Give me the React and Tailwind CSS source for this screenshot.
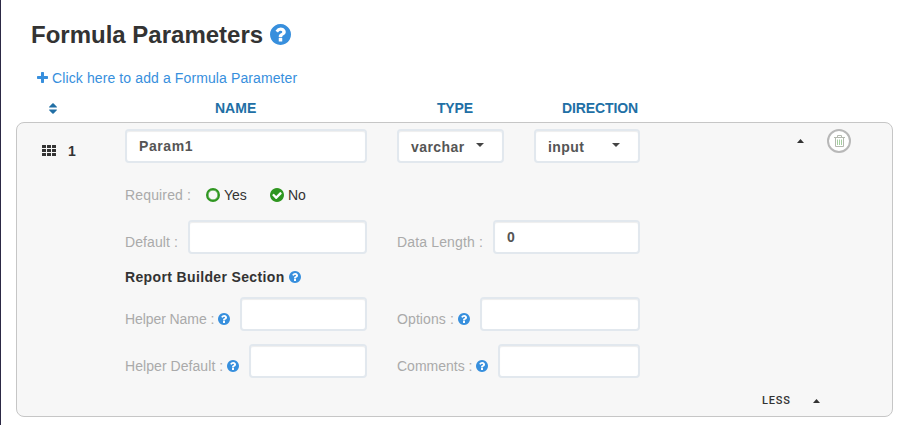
const CIRCLE =
  'm384 192q0 209-103 385.5t-279.5 279.5-385.5 103-385.5-103-279.5-279.5-103-385.5 103-385.5 279.5-279.5 385.5-103 385.5 103 279.5 279.5 103 385.5z';

function Help({ className = 'size-3', stroke = 70 }) {
  return (
    <svg viewBox="128 128 1536 1536" className={`shrink-0 ${className}`}>
      <circle cx="896" cy="896" r="700" fill="#fff" stroke="#fff" strokeWidth={stroke} />
      <path
        fill="#378fdd"
        d={
          'M1024 1376v-192q0-14-9-23t-23-9h-192q-14 0-23 9t-9 23v192q0 14 9 23t23 9h192q14 0 23-9t9-23zm256-672q0-88-55.5-163t-138.5-116-170-41q-243 0-371 213-15 24 8 42l132 100q7 6 19 6 16 0 25-12 53-68 86-92 34-24 86-24 48 0 85.5 26t37.5 59q0 38-20 61t-68 45q-63 28-115.5 86.5t-52.5 125.5v36q0 14 9 23t23 9h192q14 0 23-9t9-23q0-19 21.5-49.5t54.5-49.5q32-18 49-28.5t46-35 44.5-48 28-60.5 12.5-81z' +
          CIRCLE
        }
      />
    </svg>
  );
}

function Box({ className = '', children }) {
  return (
    <div
      className={`flex h-[34px] shrink-0 items-center rounded border-2 border-[#e2e8ee] bg-white pl-3 text-sm font-bold text-[#555] shadow-[inset_0_1px_1px_rgba(0,0,0,0.07)] ${className}`}
    >
      {children}
    </div>
  );
}

function Field({ label, help, tracking = '', box, value, className }) {
  return (
    <div className={`flex justify-between ${className}`}>
      <div className="flex items-center gap-1 pt-2.5 text-sm whitespace-nowrap text-[#aaa]">
        <span className={tracking}>{label} :</span>
        {help && <Help />}
      </div>
      <Box className={box}>{value}</Box>
    </div>
  );
}

function Down() {
  return (
    <svg viewBox="0 0 8 4" className="mb-1 h-1 w-2" fill="#444">
      <path d="M0 0h8L4 4z" />
    </svg>
  );
}

function Up() {
  return (
    <svg viewBox="0 0 7 4" className="h-1 w-[7px]" fill="#333">
      <path d="M0 4h7L3.5 0z" />
    </svg>
  );
}

export default function App() {
  return (
    <div className="h-[425px] w-[922px] overflow-hidden border-l border-[#2c2945] bg-white font-['Liberation_Sans',Arial,sans-serif] text-sm text-[#333]">
      <h1 className="flex h-[50px] items-center gap-[7px] pt-[19px] pl-[30px] text-2xl leading-[30px] font-bold">
        Formula Parameters
        <Help className="size-[21px]" />
      </h1>

      <div className="mt-[18px] flex h-5 items-center gap-1 pl-9 tracking-[0.11px] text-[#378fdd]">
        <svg viewBox="0 0 11 11" className="mb-px size-[11px]" fill="#378fdd">
          <path d="M4 .7Q4 0 4.7 0h1.6Q7 0 7 .7V4h3.3q.7 0 .7.7v1.6q0 .7-.7.7H7v3.3q0 .7-.7.7H4.7Q4 11 4 10.3V7H.7Q0 7 0 6.3V4.7Q0 4 .7 4H4z" />
        </svg>
        Click here to add a Formula Parameter
      </div>

      <div className="mt-2.5 flex h-5 items-center pl-12 font-bold text-[#216fa5]">
        <svg viewBox="0 0 9 12" className="h-[11px] w-2" fill="#216fa5">
          <path d="M.6 5h7.8q.8-.2.4-.9L4.9.2q-.4-.3-.8 0L.2 4.1Q-.2 4.8.6 5zM.6 7h7.8q.8.2.4.9l-3.9 3.9q-.4.3-.8 0L.2 7.9Q-.2 7.2.6 7z" />
        </svg>
        <span className="ml-[158px] w-[222px]">NAME</span>
        <span className="w-[125px] tracking-[-0.2px]">TYPE</span>
        <span className="tracking-[-0.1px]">DIRECTION</span>
      </div>

      <div className="mt-1 ml-[15px] flex h-[295px] w-[877px] rounded-lg border border-[#c6c6c6] bg-[#f7f7f7] pt-1.5 pl-6">
        <div className="flex h-11 w-[84px] items-center gap-[11px] pl-px font-bold">
          <svg viewBox="0 0 15 11" className="mb-px h-[11px] w-[15px]" fill="#333">
            <rect width="4" height="3" rx=".3" />
            <rect x="5" width="4" height="3" rx=".3" />
            <rect x="10" width="4" height="3" rx=".3" />
            <rect y="4" width="4" height="3" rx=".3" />
            <rect x="5" y="4" width="4" height="3" rx=".3" />
            <rect x="10" y="4" width="4" height="3" rx=".3" />
            <rect y="8" width="4" height="3" rx=".3" />
            <rect x="5" y="8" width="4" height="3" rx=".3" />
            <rect x="10" y="8" width="4" height="3" rx=".3" />
          </svg>
          1
        </div>

        <div className="w-[515px]">
          <div className="flex">
            <Box className="w-[242px] tracking-[0.6px]">Param1</Box>
            <Box className="ml-[30px] w-[107px] justify-between pt-0.5 pr-[18px] tracking-[0.45px]">
              varchar
              <Down />
            </Box>
            <Box className="ml-[30px] w-[106px] justify-between pt-0.5 pr-[18px] tracking-[0.4px]">
              input
              <Down />
            </Box>
          </div>

          <div className="mt-[22px] flex h-5 items-center">
            <span className="w-[81px] tracking-[0.15px] text-[#aaa]">Required :</span>
            <span className="mb-px size-3.5 rounded-full border-2 border-[#2f9620] shadow-[inset_0_0_0_0.5px_#2f9620]" />
            <span className="ml-1 w-[46px]">Yes</span>
            <svg viewBox="128 128 1536 1536" className="mb-px size-3.5">
              <circle cx="896" cy="896" r="700" fill="#fff" />
              <path
                fill="#2f9620"
                d={
                  'M1412 734q0-28-18-46l-91-90q-19-19-45-19t-45 19l-408 407-226-226q-19-19-45-19t-45 19l-91 90q-18 18-18 46 0 27 18 45l362 362q19 19 45 19 27 0 46-19l543-543q18-18 18-45z' +
                  CIRCLE.replace('m384 192', 'm252 162')
                }
              />
            </svg>
            <span className="ml-1">No</span>
          </div>

          <div className="mt-[15px] flex gap-[30px]">
            <Field label="Default" tracking="tracking-[0.1px]" box="w-[179px]" className="w-[242px]" />
            <Field label="Data Length" tracking="tracking-[0.15px]" box="w-[147px]" value="0" className="w-[243px]" />
          </div>

          <div className="mt-[13px] flex h-5 items-center gap-1 font-bold">
            <span className="tracking-[0.36px]">Report Builder Section</span>
            <Help />
          </div>

          <div className="mt-2.5 flex gap-[30px]">
            <Field label="Helper Name" help tracking="tracking-[-0.08px]" box="w-[127px]" className="w-[242px]" />
            <Field label="Options" help tracking="tracking-[0.1px]" box="w-[160px]" className="w-[243px]" />
          </div>
          <div className="mt-[13px] flex gap-[30px]">
            <Field label="Helper Default" help tracking="tracking-[0.06px]" box="w-[118px]" className="w-[242px]" />
            <Field label="Comments" help box="w-[142px]" className="w-[243px]" />
          </div>
        </div>

        <div className="flex w-[211px] flex-col justify-between pb-[5px] pl-[122px]">
          <div className="flex h-6 items-center pl-[35px]">
            <Up />
            <div className="ml-[23px] flex size-6 items-center justify-center rounded-full border-2 border-[#b8b8b8] bg-white">
              <svg viewBox="0 0 11 12" className="h-3 w-[11px]" fill="none" stroke="#b4b9af">
                <path d="M0 2.5h11M3.5 2V.5h4V2M1.5 3v8.5h8V3" />
                <path d="M3.5 4.5v5.5M5.5 4.5v5.5M7.5 4.5v5.5" stroke="#a5cfa0" />
              </svg>
            </div>
          </div>
          <div className="flex h-5 items-center font-[Roboto,sans-serif] text-[11px] font-medium tracking-[0.8px]">
            <span className="w-[51px]">LESS</span>
            <Up />
          </div>
        </div>
      </div>
    </div>
  );
}
